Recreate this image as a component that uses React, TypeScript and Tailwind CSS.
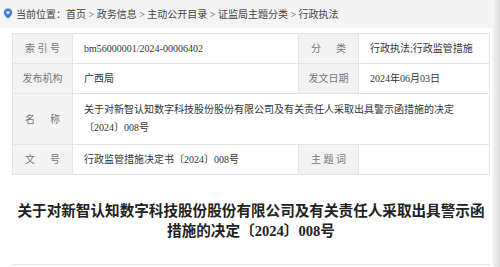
import React from 'react';

const font = { fontFamily: '"Liberation Serif", "Noto Sans CJK SC", serif' };

const Label: React.FC<{ text: string; className?: string }> = ({ text, className = '' }) => (
  <div className={`bg-[#f3f3f3] text-[#777] flex items-center justify-center text-[10px] ${className}`}>
    <span className="whitespace-pre">{text}</span>
  </div>
);

const Value: React.FC<{ children: React.ReactNode; className?: string }> = ({ children, className = '' }) => (
  <div className={`text-[#333] text-[10px] flex items-center pl-[11px] pr-2 ${className}`}>{children}</div>
);

export default function App() {
  return (
    <div className="w-[500px] h-[267px] flex bg-white overflow-hidden" style={font}>
      <div className="w-[492px] flex flex-col">
        {/* breadcrumb */}
        <div className="h-[28px] bg-[#f4f4f4] flex items-center pl-[3px] text-[10px] text-[#444] shrink-0">
          <svg width="10" height="11" viewBox="0 0 10 11" className="mr-[3px] -mt-[2px]">
            <path d="M5 0.5C2.6 0.5 0.8 2.3 0.8 4.5C0.8 7.3 5 10.7 5 10.7C5 10.7 9.2 7.3 9.2 4.5C9.2 2.3 7.4 0.5 5 0.5Z" fill="#3a7bd5" />
            <circle cx="5" cy="4.5" r="1.6" fill="#f4f4f4" />
          </svg>
          <span>当前位置：首页 &gt; 政务信息 &gt; 主动公开目录 &gt; 证监局主题分类 &gt; 行政执法</span>
        </div>

        {/* info table */}
        <div className="ml-[12px] mt-[5px] w-[478px] border border-[#e5e5e5] grid grid-cols-[60px_226px_60px_1fr] grid-rows-[30px_30px_51px_29px] [&>div]:border-[#e5e5e5]">
          <Label text="索 引 号" className="border-r border-b" />
          <Value className="border-r border-b">bm56000001/2024-00006402</Value>
          <Label text="分      类" className="border-r border-b" />
          <Value className="border-b">行政执法;行政监管措施</Value>

          <Label text="发布机构" className="border-r border-b" />
          <Value className="border-r border-b">广西局</Value>
          <Label text="发文日期" className="border-r border-b" />
          <Value className="border-b">2024年06月03日</Value>

          <Label text="名      称" className="border-r border-b" />
          <Value className="col-span-3 border-b leading-[18px]">
            关于对新智认知数字科技股份股份有限公司及有关责任人采取出具警示函措施的决定〔2024〕008号
          </Value>

          <Label text="文      号" className="border-r" />
          <Value className="border-r">行政监管措施决定书〔2024〕008号</Value>
          <Label text="主 题 词" className="border-r" />
          <Value>{''}</Value>
        </div>

        {/* title */}
        <div className="ml-[12px] w-[478px] h-[90px] border-b border-[#e6e6e6] flex items-center justify-center pt-[3px]">
          <h1 className="text-[14.6px] font-bold text-[#222] leading-[20px] text-center">
            关于对新智认知数字科技股份股份有限公司及有关责任人采取出具警示函
            <br />
            措施的决定〔2024〕008号
          </h1>
        </div>
      </div>
      <div className="flex-1 bg-gradient-to-r from-[#f7f7f7] to-[#dcdcdc]" />
    </div>
  );
}
